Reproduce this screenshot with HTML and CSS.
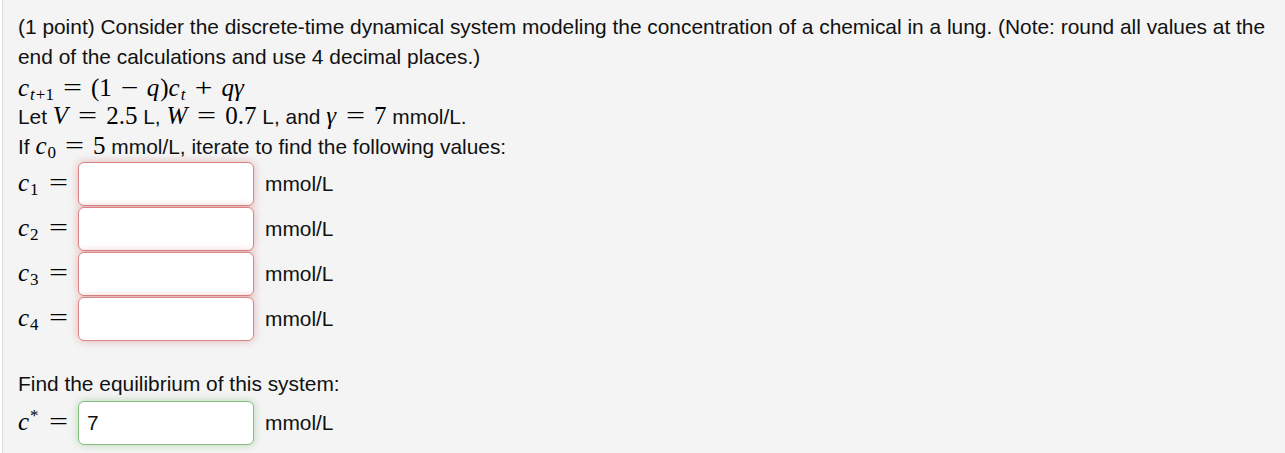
FILE: index.html
```html
<!DOCTYPE html>
<html>
<head>
<meta charset="utf-8">
<link rel="stylesheet" href="styles.css">
</head>
<body>
<div class="problem">
  <p class="intro">(1 point) Consider the discrete-time dynamical system modeling the concentration of a chemical in a lung. (Note: round all values at the end of the calculations and use 4 decimal places.)</p>
  <div class="line formula"><span class="m"><i>c</i><sub><i>t</i>+1</sub></span><span class="m op">=</span><span class="m">(1</span><span class="m bin">−</span><span class="m"><i>q</i>)<i>c</i><sub><i>t</i></sub></span><span class="m bin">+</span><span class="m"><i>qγ</i></span></div>
  <div class="line">Let <span class="m"><i>V</i></span><span class="m op">=</span><span class="m">2.5</span> L, <span class="m"><i>W</i></span><span class="m op">=</span><span class="m">0.7</span> L, and <span class="m"><i>γ</i></span><span class="m op">=</span><span class="m">7</span> mmol/L.</div>
  <div class="line">If <span class="m"><i>c</i><sub>0</sub></span><span class="m op">=</span><span class="m">5</span> mmol/L, iterate to find the following values:</div>
  <div class="answers">
    <div class="row"><span class="lbl"><span class="m"><i>c</i><sub>1</sub></span><span class="m op">=</span></span><input class="ans wrong" type="text"><span class="unit">mmol/L</span></div>
    <div class="row"><span class="lbl"><span class="m"><i>c</i><sub>2</sub></span><span class="m op">=</span></span><input class="ans wrong" type="text"><span class="unit">mmol/L</span></div>
    <div class="row"><span class="lbl"><span class="m"><i>c</i><sub>3</sub></span><span class="m op">=</span></span><input class="ans wrong" type="text"><span class="unit">mmol/L</span></div>
    <div class="row"><span class="lbl"><span class="m"><i>c</i><sub>4</sub></span><span class="m op">=</span></span><input class="ans wrong" type="text"><span class="unit">mmol/L</span></div>
  </div>
  <div class="line eq">Find the equilibrium of this system:</div>
  <div class="row"><span class="lbl"><span class="m"><i>c</i><sup>*</sup></span><span class="m op">=</span></span><input class="ans right" type="text" value="7"><span class="unit">mmol/L</span></div>
</div>
</body>
</html>
```

FILE: styles.css
```css
html, body {
  margin: 0;
  padding: 0;
  background: #ffffff;
}
.problem {
  margin-left: 2px;
  border-left: 1px solid #dcdcdc;
  background: #f4f4f4;
  height: 453px;
  box-sizing: border-box;
  padding: 12px 5px 0 15px;
  font-family: "Liberation Sans", Arial, sans-serif;
  font-size: 20.9px;
  color: #111;
}
.intro {
  margin: 0;
  line-height: 30px;
}
.line {
  line-height: 30px;
  height: 30px;
  white-space: nowrap;
}
.formula {
  line-height: 34px;
}
.m {
  font-family: "Liberation Serif", "Times New Roman", serif;
  font-size: 25px;
  line-height: 0;
  color: #000;
}
.m i {
  padding-right: 1px;
}
.m sub, .m sup {
  font-size: 17px;
  line-height: 0;
}
.m sub {
  vertical-align: -4px;
}
.op {
  display: inline-block;
  width: 21px;
  margin: 0 8px;
  text-align: center;
  transform: scaleX(1.35);
}
.bin {
  display: inline-block;
  width: 21px;
  margin: 0 7px;
  text-align: center;
  transform: scaleX(1.25);
}
.lbl .op {
  margin: 0 6px 0 9px;
}
.answers {
  display: flex;
  flex-direction: column;
  gap: 1px;
}
.row {
  display: flex;
  align-items: center;
  height: 44px;
}
.lbl {
  width: 60px;
  white-space: nowrap;
}
.ans {
  width: 176px;
  height: 44px;
  box-sizing: border-box;
  border-radius: 6px;
  background: #fff;
  font-family: "Liberation Sans", Arial, sans-serif;
  font-size: 20.9px;
  color: #111;
  padding: 0 8px;
  margin: 0;
}
.wrong {
  border: 1px solid #d98585;
  box-shadow: 0 0 8px rgba(200, 80, 80, 0.4);
}
.right {
  border: 1px solid #86bd7f;
  box-shadow: 0 0 8px rgba(90, 170, 80, 0.4);
}
.unit {
  margin-left: 11px;
}
.eq {
  margin-top: 28px;
  margin-bottom: 2px;
}
```
